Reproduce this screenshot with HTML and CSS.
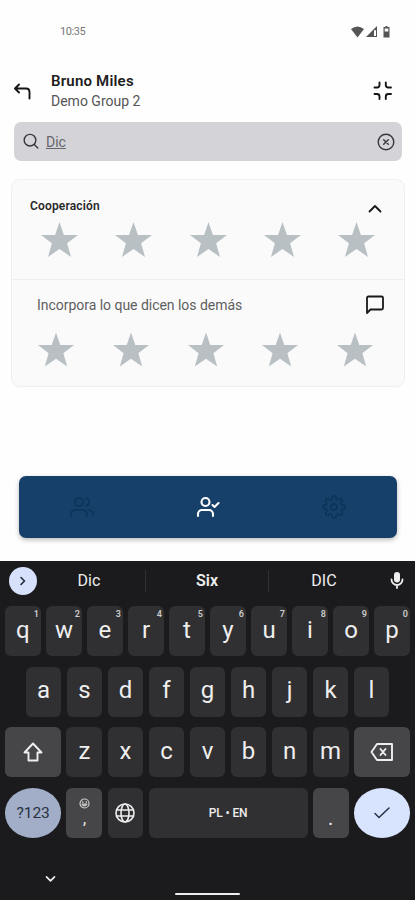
FILE: index.html
```html
<!DOCTYPE html>
<html lang="es">
<head>
<meta charset="utf-8">
<meta name="viewport" content="width=device-width">
<title>Bruno Miles</title>
<link rel="stylesheet" href="styles.css">
</head>
<body>
<svg class="defs" width="0" height="0"><symbol id="star" viewBox="0 0 36 34"><path d="M18 0 22.3 12.5 36 12.6 25.4 20.7 29.2 34 18 26.2 6.8 34 10.6 20.7 0 12.6 13.7 12.5Z"/></symbol></svg>
<div class="status">
  <span class="time">10:35</span>
  <svg width="40" height="13" viewBox="0 0 40 13" fill="#555">
    <path d="M0 3Q6.500-2 13 3L6.500 11.500Z"/>
    <path d="M26 0V11H15Z"/><path d="M23 4.300H25V10H23Z" fill="#fff"/>
    <path d="M33 1H34.500V0H36.500V1H38.500V11.500H32.500V1ZM33.700 2.500V5.500H37.300V2.500Z" fill-rule="evenodd"/>
  </svg>
</div>
<header class="header">
  <svg class="back" width="19" height="18" viewBox="0 0 19 18"><path d="M6 1.500 2 5.500 6 9.500M2.500 5.500H13Q16.500 5.500 16.500 9V15.500"/></svg>
  <div class="who"><div class="name">Bruno Miles</div><div class="group">Demo Group 2</div></div>
  <svg class="collapse" width="20" height="20" viewBox="0 0 20 20"><path d="M1.500 6.500H4Q6.500 6.500 6.500 4V1.500M12.800 1.500V4Q12.800 6.500 15.300 6.500H18M1.500 13H4Q6.500 13 6.500 15.500V18M12.800 18V15.500Q12.800 13 15.300 13H18"/></svg>
</header>
<div class="search">
  <svg width="17" height="17" viewBox="0 0 17 17"><circle cx="7" cy="7.200" r="5.800"/><path d="M11.300 11.600 14.800 15"/></svg>
  <span class="query">Dic</span>
  <svg width="18" height="18" viewBox="0 0 18 18"><circle cx="9" cy="9" r="7.800"/><path d="M6.700 6.700 11.300 11.300M11.300 6.700 6.700 11.300"/></svg>
</div>
<main class="card">
  <section class="total">
    <div class="row"><span class="label">Cooperación</span><svg width="14" height="9" viewBox="0 0 14 9"><path d="M1.500 7.500 7 2 12.500 7.500"/></svg></div>
    <div class="stars"><svg><use href="#star"/></svg><svg><use href="#star"/></svg><svg><use href="#star"/></svg><svg><use href="#star"/></svg><svg><use href="#star"/></svg></div>
  </section>
  <section class="item">
    <div class="row"><span class="label">Incorpora lo que dicen los demás</span><svg width="20" height="20" viewBox="0 0 20 20"><path d="M2 18V3Q2 1.500 3.500 1.500H16.500Q18 1.500 18 3V13Q18 14.500 16.500 14.500H5.500Z"/></svg></div>
    <div class="stars"><svg><use href="#star"/></svg><svg><use href="#star"/></svg><svg><use href="#star"/></svg><svg><use href="#star"/></svg><svg><use href="#star"/></svg></div>
  </section>
</main>
<nav class="tabs">
  <svg viewBox="0 0 24 24"><circle cx="9" cy="7" r="4"/><path d="M1 21V19a4 4 0 0 1 4-4H13a4 4 0 0 1 4 4V21M16 3.100a4 4 0 0 1 0 7.800M19 15.100A4 4 0 0 1 23 19V21"/></svg>
  <svg class="active" viewBox="0 0 24 24"><circle cx="9.500" cy="7" r="4"/><path d="M2 21V19a4 4 0 0 1 4-4H13a4 4 0 0 1 4 4V21M16.500 10 18.500 12 22.500 8"/></svg>
  <svg viewBox="0 0 24 24"><circle cx="12" cy="12" r="3"/><path d="M19.400 15a1.650 1.650 0 0 0 .33 1.820l.06.06a2 2 0 1 1-2.830 2.830l-.06-.06a1.650 1.650 0 0 0-2.820 1.170V21a2 2 0 0 1-4 0v-.09A1.650 1.650 0 0 0 7.200 19.700l-.06.06a2 2 0 1 1-2.830-2.830l.06-.06A1.650 1.650 0 0 0 3.090 14H3a2 2 0 0 1 0-4h.09A1.650 1.650 0 0 0 4.300 7.200l-.06-.06a2 2 0 1 1 2.830-2.830l.06.06A1.650 1.650 0 0 0 10 3.090V3a2 2 0 0 1 4 0v.09a1.650 1.650 0 0 0 2.820 1.170l.06-.06a2 2 0 1 1 2.830 2.830l-.06.06A1.650 1.650 0 0 0 20.910 10H21a2 2 0 0 1 0 4h-.09A1.650 1.650 0 0 0 19.400 15Z"/></svg>
</nav>
<div class="keyboard">
  <div class="suggest">
    <span class="more"><svg width="8" height="12" viewBox="0 0 8 12"><path d="M2 2.500 5.500 6 2 9.500"/></svg></span>
    <span class="word">Dic</span><span class="word strong">Six</span><span class="word">DIC</span>
    <svg class="mic" width="14" height="19" viewBox="0 0 14 19"><rect x="4" y="1" width="6" height="10.500" rx="3" fill="#eee" stroke="none"/><path d="M1.500 8.500a5.500 5.500 0 0 0 11 0M7 14V17"/></svg>
  </div>
  <div class="keys">
    <div class="key">q<sup>1</sup></div><div class="key">w<sup>2</sup></div><div class="key">e<sup>3</sup></div><div class="key">r<sup>4</sup></div><div class="key">t<sup>5</sup></div><div class="key">y<sup>6</sup></div><div class="key">u<sup>7</sup></div><div class="key">i<sup>8</sup></div><div class="key">o<sup>9</sup></div><div class="key">p<sup>0</sup></div>
  </div>
  <div class="keys middle">
    <div class="key">a</div><div class="key">s</div><div class="key">d</div><div class="key">f</div><div class="key">g</div><div class="key">h</div><div class="key">j</div><div class="key">k</div><div class="key">l</div>
  </div>
  <div class="keys">
    <div class="key wide mod"><svg width="22" height="22" viewBox="0 0 22 22"><path d="M11 2.500 19.500 11.500H15.500V19.500H6.500V11.500H2.500Z"/></svg></div>
    <div class="key">z</div><div class="key">x</div><div class="key">c</div><div class="key">v</div><div class="key">b</div><div class="key">n</div><div class="key">m</div>
    <div class="key wide mod"><svg width="24" height="20" viewBox="0 0 24 20"><path d="M7 2H22V18H7L1.500 10ZM10.500 7 15.500 13M15.500 7 10.500 13"/></svg></div>
  </div>
  <div class="keys">
    <div class="key wide oval numeric">?123</div>
    <div class="key mod comma"><svg width="11" height="11" viewBox="0 0 11 11"><circle cx="5.500" cy="5.500" r="4.500"/><path d="M3 6.200Q5.500 9.500 8 6.200ZM3.800 3.500V4.500M7.200 3.500V4.500"/></svg><span>,</span></div>
    <div class="key"><svg class="globe" width="20" height="20" viewBox="0 0 20 20"><circle cx="10" cy="10" r="9"/><ellipse cx="10" cy="10" rx="4" ry="9"/><path d="M1.500 7H18.500M1.500 13H18.500"/></svg></div>
    <div class="key space">PL • EN</div>
    <div class="key mod dot">.</div>
    <div class="key wide oval enter"><svg width="18" height="14" viewBox="0 0 18 14"><path d="M2 7.500 6 11.500 16 2"/></svg></div>
  </div>
  <div class="system"><svg width="11" height="8" viewBox="0 0 11 8"><path d="M1.500 1.800 5.500 5.800 9.500 1.800"/></svg><span class="home"></span></div>
</div>
</body>
</html>
```
FILE: styles.css
```css
* { box-sizing: border-box; }
body { margin: 0; width: 415px; height: 900px; overflow: hidden; background: #fefefe; font-family: Roboto, sans-serif; display: flex; flex-direction: column; }
svg { display: block; flex: none; fill: none; stroke-linecap: round; stroke-linejoin: round; }
.defs { position: absolute; }
.status { height: 62px; padding: 1px 24px 0 60px; display: flex; align-items: center; justify-content: space-between; }
.status svg { fill: #555; margin-top: 2px; }
.time { font-size: 11px; color: #777; letter-spacing: -.4px; }
.header { height: 60px; padding: 8px 22px 0 13px; display: flex; align-items: flex-start; }
.header svg { stroke: #151515; stroke-width: 1.9; }
.back { margin-top: 13px; }
.collapse { margin: 11px 0 0 auto; }
.who { margin-left: 19px; line-height: 21px; white-space: nowrap; }
.name { font-size: 15px; font-weight: 600; color: #202020; letter-spacing: .2px; padding-top: 1px; line-height: 20px; }
.group { font-size: 14px; color: #555; letter-spacing: 0; }
.search { height: 39px; margin: 0 13px 0 14px; padding: 0 7px 0 9px; border-radius: 7px; background: #d4d3d8; display: flex; align-items: center; }
.search svg { stroke: #38383c; stroke-width: 1.4; }
.query { margin-left: 6px; flex: 1; font-size: 14px; color: #66666b; text-decoration: underline; }
.card { height: 208px; margin: 18px 10px 0 11px; border: 1px solid #eeefef; border-radius: 9px; background: #fafafa; }
.total { height: 100px; border-bottom: 1px solid #eeefef; }
.row { display: flex; align-items: center; justify-content: space-between; }
.row svg { stroke: #181818; stroke-width: 1.8; }
.total .row { height: 42px; padding: 10px 22px 0 18px; }
.total .row svg { margin-top: 4px; }
.total .label { font-size: 12px; font-weight: 600; color: #292929; letter-spacing: .16px; }
.item .row { height: 50px; padding: 0 19px 0 25px; }
.item .label { font-size: 14px; color: #606060; letter-spacing: -.03px; }
.stars { display: flex; justify-content: space-between; padding: 0 29px; }
.item .stars { padding: 2px 31px 0 26px; }
.stars svg { width: 37px; height: 35px; fill: #b9c0c4; }
.item .stars svg { width: 36px; }
.tabs { height: 62px; margin: 89px 18px 0 19px; border-radius: 7px; background: #164069; box-shadow: 0 2px 5px #0004; display: flex; align-items: center; }
.tabs svg { width: 24px; height: 24px; margin: 0 auto; stroke: #0f3459; stroke-width: 1.8; }
.tabs .active { stroke: #fff; stroke-width: 2.1; }
.keyboard { height: 339px; margin-top: 23px; background: #1b1b1d; color: #eee; }
.suggest { height: 45px; padding: 0 11px 6px 9px; display: flex; align-items: center; }
.more { width: 28px; height: 28px; border-radius: 50%; background: #d8e1fb; display: grid; place-items: center; }
.more svg { stroke: #222a38; stroke-width: 1.6; }
.word { width: 124px; text-align: center; font-size: 16px; line-height: 22px; }
.word:nth-child(2) { width: 108px; padding-right: 4px; }
.word:nth-child(4) { width: 108px; padding-left: 2px; }
.strong { font-weight: 600; border: solid #313133; border-width: 0 1px; }
.mic { margin-left: auto; stroke: #eee; stroke-width: 1.8; }
.keys { height: 50px; margin: 0 5px 10.500px; display: flex; gap: 5.200px; }
.keys.middle { margin-left: 25.500px; margin-right: 25.500px; }
.key { position: relative; flex: 1 1 0; min-width: 0; border-radius: 6px; background: #303032; display: flex; align-items: center; justify-content: center; font-size: 24px; line-height: 28px; padding-bottom: 3px; }
.key sup { position: absolute; right: 2px; top: 2px; font-size: 9px; line-height: 12px; font-weight: 600; color: #ccc; }
.key svg { stroke: #eee; stroke-width: 1.9; }
.key.wide { flex: 0 0 56.300px; padding: 0; }
.mod { background: #464649; }
.wide.oval { border-radius: 50%; }
.numeric { background: #a2aec7; color: #293141; font-size: 15.500px; letter-spacing: -.1px; }
.comma { flex: 0 0 36px; flex-direction: column; font-size: 16px; line-height: 20px; padding: 2px 0 0; }
.comma svg { stroke-width: 1.200; stroke: #ccc; }
.key .globe { stroke-width: 1.600; margin-top: 3px; }
.space { flex: 0 0 159.200px; font-size: 12px; font-weight: 500; letter-spacing: -.1px; padding: 0; }
.dot { font-size: 20px; padding: 10px 0 0; }
.enter { background: #d8e3fd; }
.enter svg { stroke: #263042; stroke-width: 1.500; }
.system { height: 51px; padding: 26px 0 0 45px; display: flex; align-items: flex-start; }
.system svg { stroke: #eee; stroke-width: 1.700; margin-top: 1px; }
.home { width: 65px; height: 2px; margin: 19px 0 0 119px; border-radius: 1px; background: #eee; }
```
